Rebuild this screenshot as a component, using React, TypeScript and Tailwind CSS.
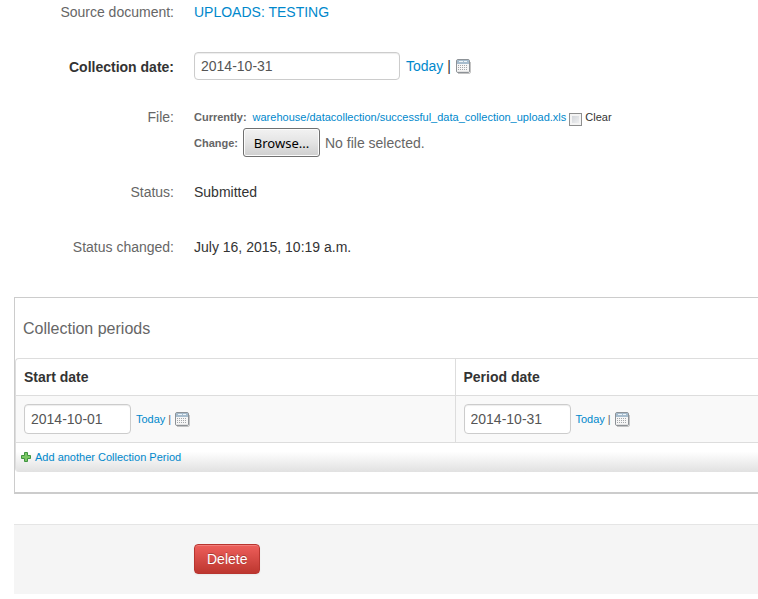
import { useRef, useState } from "react";
import type { ReactNode } from "react";

interface IFormRowProps {
  label: ReactNode;
  children: ReactNode;
}

const FormRow = ({ label, children }: IFormRowProps) => (
  <div className="flex items-start gap-5">
    <div className="w-40 shrink-0 text-right">{label}</div>
    <div className="min-w-0 flex-1 text-[#333333]">{children}</div>
  </div>
);

const CalendarIcon = () => (
  <svg width="16" height="16" viewBox="0 0 16 16" aria-hidden="true">
    <path d="M3 15.5h11a1.5 1.5 0 0 0 1.5-1.5V4" fill="none" stroke="#c4c4c4" />
    <rect x="1.5" y="1.5" width="13" height="13" rx="1.5" fill="#f6f6f6" stroke="#8d9297" />
    <path d="M2 2h12v4H2z" fill="#a6bccd" />
    <path d="M4 3h4v1H4zM9 3h3v1H9z" fill="#eef4f8" />
    <path
      d="M3 7.5h10M3 9.5h10M3 11.5h10"
      stroke="#a3a6a9"
      strokeDasharray="1 1"
    />
    <path d="M2 13h12v1H2z" fill="#e2e2e2" />
  </svg>
);

const PlusIcon = () => (
  <svg width="12" height="12" viewBox="0 0 12 12" aria-hidden="true">
    <path
      d="M4.5 1.5h3v3h3v3h-3v3h-3v-3h-3v-3h3z"
      fill="#7cc765"
      stroke="#3f9440"
      strokeLinejoin="round"
    />
  </svg>
);

const DateShortcuts = ({ onToday }: { onToday: () => void }) => (
  <>
    <button type="button" onClick={onToday} className="cursor-pointer text-[#0088cc] hover:underline">
      Today
    </button>
    <span aria-hidden="true">|</span>
    <button type="button" aria-label="Choose date" className="cursor-pointer">
      <CalendarIcon />
    </button>
  </>
);

const today = () => new Date().toISOString().slice(0, 10);

const inputStyle =
  "rounded border border-[#cccccc] bg-white px-1.5 text-sm text-[#555555] shadow-[inset_0_1px_1px_rgba(0,0,0,0.075)] outline-none focus:border-[#52a8ec]";

const PeriodCell = ({ label, initial }: { label: string; initial: string }) => {
  const [value, setValue] = useState(initial);

  return (
    <div className="flex items-center gap-[3px] text-[11px] text-[#666666]">
      <input
        type="text"
        aria-label={label}
        value={value}
        onChange={(e) => setValue(e.target.value)}
        className={`mr-0.5 h-[30px] w-[107px] ${inputStyle}`}
      />
      <DateShortcuts onToday={() => setValue(today())} />
    </div>
  );
};

const App = () => {
  const [date, setDate] = useState("2014-10-31");
  const [fileName, setFileName] = useState("");
  const fileRef = useRef<HTMLInputElement>(null);

  return (
    <form
      onSubmit={(e) => e.preventDefault()}
      className="overflow-hidden bg-white pt-0.5 pl-3.5 font-['Liberation_Sans',Arial,sans-serif] text-sm leading-5 text-[#666666]"
    >
      <FormRow label="Source document:">
        <a href="#source" className="text-[#0088cc] hover:underline">
          UPLOADS: TESTING
        </a>
      </FormRow>

      <div className="mt-[30px]">
        <FormRow
          label={
            <label htmlFor="collection-date" className="block pt-[5px] font-bold text-[#333333]">
              Collection date:
            </label>
          }
        >
          <div className="flex items-center gap-1">
            <input
              id="collection-date"
              type="text"
              value={date}
              onChange={(e) => setDate(e.target.value)}
              className={`mr-0.5 h-7 w-[206px] ${inputStyle}`}
            />
            <DateShortcuts onToday={() => setDate(today())} />
          </div>
        </FormRow>
      </div>

      <div className="mt-[27px]">
        <FormRow label={<label htmlFor="upload">File:</label>}>
          <div className="flex h-5 items-center gap-[3px] text-[11px]">
            <span className="mr-[3px] font-bold text-[#666666]">Currently:</span>
            <a href="#file" className="text-[#0088cc] hover:underline">
              warehouse/datacollection/successful_data_collection_upload.xls
            </a>
            <input
              id="clear"
              type="checkbox"
              className="mt-1 size-[13px] appearance-none border border-[#8e8f8f] bg-linear-to-br from-[#cbcfd5] to-[#f6f6f6] shadow-[inset_0_0_0_2px_#f4f4f4] checked:bg-[#0088cc]"
            />
            <label htmlFor="clear">Clear</label>
          </div>
          <div className="mt-px flex items-center gap-[5px] text-[11px] text-[#666666]">
            <span className="font-bold">Change:</span>
            <button
              type="button"
              onClick={() => fileRef.current?.click()}
              className="h-[29px] w-[77px] rounded-[3px] border border-[#707070] bg-linear-to-b from-[#f2f2f2] via-[#e4e4e4] to-[#cfcfcf] font-['Noto_Sans','Open_Sans',sans-serif] text-[13px] text-black shadow-[inset_0_0_0_1px_#fcfcfc]"
            >
              Browse...
            </button>
            <input
              ref={fileRef}
              id="upload"
              type="file"
              className="hidden"
              onChange={(e) => setFileName(e.target.files?.[0]?.name ?? "")}
            />
            <span className="text-sm">{fileName || "No file selected."}</span>
          </div>
        </FormRow>
      </div>

      <div className="mt-[25px]">
        <FormRow label="Status:">Submitted</FormRow>
      </div>

      <div className="mt-[35px]">
        <FormRow label="Status changed:">July 16, 2015, 10:19 a.m.</FormRow>
      </div>

      <section className="mt-10 border border-r-0 border-b-2 border-[#cccccc] pb-5">
        <h2 className="px-2 pt-[21px] pb-[19px] text-base leading-5">Collection periods</h2>
        <div className="overflow-hidden rounded-l border-t border-l border-[#dddddd]">
          <table className="w-full table-fixed border-collapse text-left">
            <thead>
              <tr className="border-b border-[#dddddd] text-[#333333]">
                <th className="h-9 w-[439px] border-r border-[#dddddd] px-2">Start date</th>
                <th className="px-2">Period date</th>
              </tr>
            </thead>
            <tbody>
              <tr className="border-b border-[#dddddd] bg-[#f9f9f9]">
                <td className="border-r border-[#dddddd] p-2">
                  <PeriodCell label="Start date" initial="2014-10-01" />
                </td>
                <td className="p-2">
                  <PeriodCell label="Period date" initial="2014-10-31" />
                </td>
              </tr>
            </tbody>
          </table>
          <div className="flex h-[29px] items-center bg-linear-to-b from-white from-30% to-[#e1e1e1] pl-1 text-[11px]">
            <button type="button" className="flex cursor-pointer items-center gap-[3px] text-[#0088cc] hover:underline">
              <PlusIcon />
              Add another Collection Period
            </button>
          </div>
        </div>
      </section>

      <div className="mt-[30px] border-t border-[#e5e5e5] bg-[#f5f5f5] pt-[19px] pb-5 pl-[180px]">
        <button
          type="button"
          className="block h-[30px] cursor-pointer rounded border border-[#b8352f] bg-linear-to-b from-[#ee5f5b] to-[#bd362f] px-3 text-white shadow-[inset_0_1px_0_rgba(255,255,255,0.2),0_1px_2px_rgba(0,0,0,0.05)] text-shadow-[0_-1px_0_rgba(0,0,0,0.25)]"
        >
          Delete
        </button>
      </div>
    </form>
  );
};

export default App;
